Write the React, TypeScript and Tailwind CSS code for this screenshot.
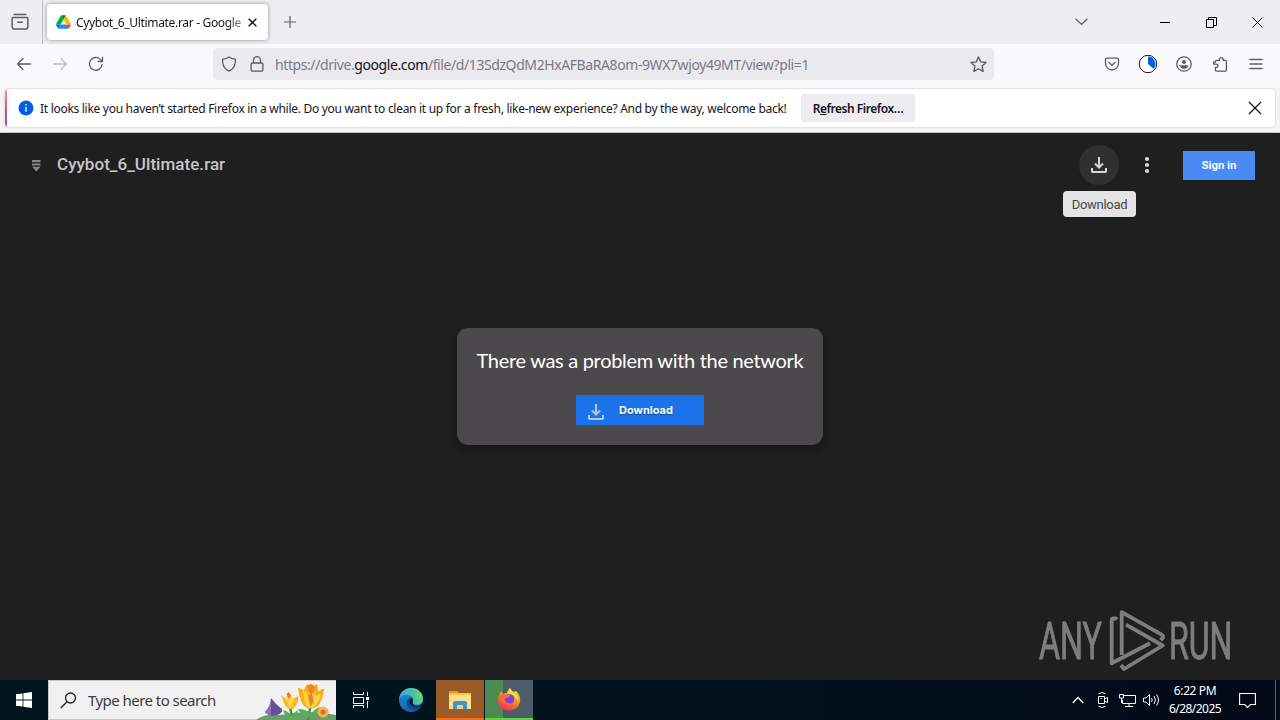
import type { ReactNode } from "react";

const stroke = { fill: "none", strokeLinecap: "round", strokeLinejoin: "round" } as const;

function ToolIcon({ children, size = 16, width = 1.3, className = "" }: { children: ReactNode; size?: number; width?: number; className?: string }) {
  return (
    <svg width={size} height={size} viewBox="0 0 16 16" stroke="currentColor" strokeWidth={width} {...stroke} className={`block shrink-0 ${className}`}>
      {children}
    </svg>
  );
}

function DriveLogo() {
  return (
    <svg width="15" height="14" viewBox="0 0 87.3 78" className="block shrink-0">
      <path fill="#0066da" d="m6.6 66.85 3.85 6.65c.8 1.4 1.95 2.5 3.3 3.3l13.75-23.8h-27.5c0 1.55.4 3.1 1.2 4.5z" />
      <path fill="#00ac47" d="m43.65 25-13.75-23.8c-1.35.8-2.5 1.9-3.3 3.3l-25.4 44a9.06 9.06 0 0 0 -1.2 4.5h27.5z" />
      <path fill="#ea4335" d="m73.55 76.8c1.35-.8 2.5-1.9 3.3-3.3l1.6-2.75 7.65-13.25c.8-1.4 1.2-2.95 1.2-4.5h-27.5l5.85 11.5z" />
      <path fill="#00832d" d="m43.65 25 13.75-23.8c-1.35-.8-2.9-1.2-4.5-1.2h-18.5c-1.6 0-3.15.45-4.5 1.2z" />
      <path fill="#2684fc" d="m59.8 53h-32.3l-13.75 23.8c1.35.8 2.9 1.2 4.5 1.2h50.8c1.6 0 3.15-.45 4.5-1.2z" />
      <path fill="#ffba00" d="m73.4 26.5-12.7-22c-.8-1.4-1.95-2.5-3.3-3.3l-13.75 23.8 16.15 28h27.45c0-1.55-.4-3.1-1.2-4.5z" />
    </svg>
  );
}

function DownloadIcon({ className = "" }: { className?: string }) {
  return (
    <svg width="18" height="18" viewBox="0 0 18 18" fill="none" stroke="currentColor" strokeWidth="2" className={`block shrink-0 ${className}`}>
      <path d="M9 1v10M5 7.5l4 4 4-4M2 12v3.6c0 .3.2.4.4.4h13.2c.3 0 .4-.1.4-.4V12" />
    </svg>
  );
}

function TabStrip() {
  return (
    <div className="flex h-11 items-center bg-[#eeedf2] text-[#5b5b66]">
      <div className="flex h-11 w-[43px] items-center justify-center border-r border-[#bdbcc4] pr-[2px]">
        <ToolIcon size={18}>
          <path d="M2.7 1.4h10.6M2 4h12a1 1 0 0 1 1 1v7.3a2 2 0 0 1-2 2H3a2 2 0 0 1-2-2V5a1 1 0 0 1 1-1ZM6 8.2h4" />
        </ToolIcon>
      </div>
      <div className="ml-[4px] flex h-9 w-[221px] items-center rounded bg-white pl-[9px] text-[#15141a] shadow-[0_0_4px_rgba(0,0,0,0.4)]">
        <DriveLogo />
        <div className="ml-[5px] mt-[2px] w-[168px] whitespace-nowrap bg-gradient-to-r from-[#15141a] from-90% to-[#15141a66] bg-clip-text text-[12px] leading-4 tracking-[-0.33px] text-transparent">
          Cyybot_6_Ultimate.rar - Google
        </div>
        <svg width="9" height="9" viewBox="0 0 9 9" stroke="#15141a" strokeWidth="1.5" className="ml-[4px]">
          <path d="M.7.7l7.6 7.6M8.3.7L.7 8.3" />
        </svg>
      </div>
      <svg width="12" height="12" viewBox="0 0 12 12" stroke="#5b5b66" strokeWidth="1.2" className="ml-[16px]">
        <path d="M6 0v12M0 6h12" />
      </svg>
      <div className="ml-auto flex items-center">
        <svg width="13" height="8" viewBox="0 0 13 8" stroke="#5b5b66" strokeWidth="1.3" {...stroke} className="mr-[72px]">
          <path d="M1 1.2l5.5 5.2L12 1.2" />
        </svg>
        <div className="mr-[36px] h-px w-[10px] bg-black" />
        <svg width="11" height="11" viewBox="0 0 11 11" fill="none" stroke="#000" className="mr-[35px]">
          <path d="M.5 2.5h7v8h-7zM2.5 2.5v-2h8v8h-3" />
        </svg>
        <svg width="11" height="11" viewBox="0 0 11 11" stroke="#000" strokeWidth="1" className="mr-[17px]">
          <path d="M.5.5l10 10M10.5.5l-10 10" />
        </svg>
      </div>
    </div>
  );
}

function NavBar() {
  return (
    <div className="flex h-11 items-start bg-[#f9f9fb] pt-1 text-[#5b5b66]">
      <div className="flex h-8 w-[213px] items-center gap-5 pl-4">
        <ToolIcon><path d="M1.5 8h13M7 2.5L1.5 8 7 13.5" /></ToolIcon>
        <ToolIcon className="text-[#c0c0c6]"><path d="M1.5 8h13M9 2.5L14.5 8 9 13.5" /></ToolIcon>
        <ToolIcon><path d="M14.2 8.3A6.4 6.4 0 1 1 12.4 3.4L14.3 5.2M14.5 1.2v4.3h-4.3" /></ToolIcon>
      </div>
      <div className="flex h-8 w-[781px] items-center rounded bg-[#eae9ee] pl-2">
        <ToolIcon><path d="M8 .9c1.7 1.3 4 2 6.4 2.2.4 5-1.3 9.7-6.4 12C2.9 12.8 1.2 8.1 1.6 3.1 4 2.9 6.3 2.2 8 .9Z" /></ToolIcon>
        <ToolIcon className="ml-3"><path d="M4.5 7V4.2a3.5 3.5 0 0 1 7 0V7M3.300 7h9.4c.7 0 1.2.5 1.2 1.2v5.6c0 .8-.5 1.3-1.2 1.3H3.3c-.7 0-1.2-.5-1.2-1.3V8.2C2.1 7.5 2.6 7 3.3 7Z" /></ToolIcon>
        <div className="ml-[10px] mt-[2px] whitespace-nowrap text-[14px] leading-5 tracking-[-0.41px] text-[#7b7a82]">
          https://drive.<span className="text-[#15141a]">google.com</span>/file/d/13SdzQdM2HxAFBaRA8om-9WX7wjoy49MT/view?pli=1
        </div>
        <ToolIcon size={17} className="ml-auto mr-[7px]"><path d="M8 1l2.1 4.5 4.9.6-3.6 3.4.9 4.9L8 12l-4.3 2.4.9-4.9L1 6.1l4.9-.6z" /></ToolIcon>
      </div>
      <div className="ml-auto flex h-8 items-center gap-5 pr-4">
        <ToolIcon><path d="M2.5 2.2h11a1 1 0 0 1 1 1V7.500a6.5 6.5 0 0 1-13 0V3.2a1 1 0 0 1 1-1ZM4.8 6.2L8 9.2l3.2-3" /></ToolIcon>
        <svg width="20" height="20" viewBox="0 0 20 20" className="-mx-[2px] block">
          <circle cx="10" cy="10" r="8.7" fill="#fff" stroke="#15141a" />
          <path d="M10 10V2.6a7.4 7.4 0 0 1 5.6 12.2z" fill="#0061e0" />
        </svg>
        <ToolIcon>
          <circle cx="8" cy="8" r="7.2" />
          <circle cx="8" cy="6" r="2.1" fill="currentColor" stroke="none" />
          <path d="M3.9 9.6h8.2c-.4 2-2.1 3.2-4.1 3.2s-3.7-1.2-4.1-3.2Z" fill="currentColor" strokeWidth=".5" />
        </ToolIcon>
        <ToolIcon><path d="M3.400 6.200V5.500c0-.8.4-1.200 1.200-1.200H7.500V3a1.900 1.900 0 0 1 3.700 0v1.300h2c.8 0 1.2.4 1.2 1.2v8.4c0 .8-.4 1.2-1.2 1.2H4.6c-.8 0-1.2-.4-1.2-1.2v-2.500h1a1.600 1.600 0 0 0 0-3.200H1.600V6.200z" /></ToolIcon>
        <ToolIcon><path d="M2 3.500h12M2 8h12M2 12.500h12" /></ToolIcon>
      </div>
    </div>
  );
}

function Notification() {
  return (
    <div className="h-[45px] border-b border-[#c4c4c8] bg-[#f4f4f6] px-[5px] pt-px">
      <div className="flex h-[38px] items-center overflow-hidden rounded bg-white text-[#15141a] shadow-[0_0_2px_rgba(0,0,0,0.25)]">
        <div className="h-full w-[2px] bg-gradient-to-b from-[#f5a068] via-[#d3508f] to-[#8d55c0]" />
        <svg width="16" height="16" viewBox="0 0 16 16" className="ml-[11px]">
          <circle cx="8" cy="8" r="7.5" fill="#0061e0" />
          <path d="M8 7v4.8M8 4v1.4" stroke="#fff" strokeWidth="1.3" />
        </svg>
        <div className="ml-[6px] mt-[2px] w-[761px] whitespace-nowrap text-[12px] leading-4 tracking-[-0.29px]">
          It looks like you haven’t started Firefox in a while. Do you want to clean it up for a fresh, like-new experience? And by the way, welcome back!
        </div>
        <button className="h-7 w-[114px] whitespace-nowrap rounded-[3px] bg-[#ededf0] pt-[2px] text-[12px] font-semibold tracking-[-0.47px]">
          R<span className="underline">e</span>fresh Firefox…
        </button>
        <svg width="14" height="14" viewBox="0 0 14 14" stroke="#15141a" strokeWidth="1.3" className="ml-auto mr-[13px]">
          <path d="M1 1l12 12M13 1L1 13" />
        </svg>
      </div>
    </div>
  );
}

function Watermark() {
  return (
    <svg width="204" height="64" viewBox="0 0 204 64" className="absolute bottom-[7px] right-[40px] block opacity-90">
      <g fill="#89898a" stroke="#89898a" strokeWidth=".9" fontFamily="Roboto" fontSize="51" fontWeight="400">
        <text x="3" y="50" textLength="63" lengthAdjust="spacingAndGlyphs">ANY</text>
        <text x="133" y="50" textLength="63.5" lengthAdjust="spacingAndGlyphs">RUN</text>
      </g>
      <g fill="none" stroke="#89898a" strokeWidth="3.8" strokeLinejoin="round">
        <path d="M81 10.500l-1-1h-2.300q-2 0-2 2V54.300L114 34.300" />
        <path d="M85.700 46V3.200l40 22.500q2.500 2 .5 4l-1.500 1.500" />
        <path d="M90 15.700l36.700 20.800L88 60l-3-4" />
      </g>
    </svg>
  );
}

function DriveViewer() {
  return (
    <div className="relative flex h-[547px] flex-col bg-[#1f1f1f]">
      <div className="flex h-16 items-center">
        <svg width="10" height="12" viewBox="0 0 10 12" className="ml-[31px] mt-px block" fill="#85878a">
          <path d="M1 0h8.500v2.200H1zM1 3.400h8.500v2.200H1zM1 6.800h8.500L5.300 11.500z" />
        </svg>
        <div className="ml-4 mt-[-2px] whitespace-nowrap font-['Roboto'] text-[17px] font-medium leading-6 tracking-[0.04px] text-[#c4c7c5]">Cyybot_6_Ultimate.rar</div>
        <div className="relative ml-auto flex size-10 items-center justify-center rounded-full bg-[#303030] text-[#d6d6d6]">
          <DownloadIcon />
          <div className="absolute left-[-16px] top-[46px] h-[26px] w-[73px] rounded bg-[#e3e3e3] text-center font-['Roboto'] text-[13px] leading-[28px] tracking-[-0.3px] text-[#444746]">Download</div>
        </div>
        <svg width="6" height="18" viewBox="0 0 6 18" fill="#d6d6d6" className="ml-[25px] block">
          <circle cx="3" cy="3" r="2.1" />
          <circle cx="3" cy="9" r="2.1" />
          <circle cx="3" cy="15" r="2.1" />
        </svg>
        <button className="ml-[33px] mr-[25px] h-[29px] w-[72px] bg-[#4a8af4] pt-px font-['Roboto'] text-[11.5px] font-bold tracking-[-0.1px] text-[#f3f7fe]">Sign in</button>
      </div>
      <div className="mx-auto mt-[131px] flex h-[117px] w-[366px] flex-col items-center rounded-[11px] bg-[#4b494b] pt-[18px] shadow-[0_5px_14px_rgba(0,0,0,0.3)]">
        <div className="whitespace-nowrap font-['Lato'] text-[20px] leading-7 tracking-[-0.31px] text-white">There was a problem with the network</div>
        <button className="mt-[21px] flex h-[30px] w-[128px] items-center bg-[#1a73e8] font-['Inter'] text-[11px] font-bold text-white">
          <DownloadIcon className="ml-[11px] mt-[3px] text-[#a9caf7]" />
          <span className="ml-[14px] [text-shadow:0_1px_1px_rgba(0,0,0,0.4)]">Download</span>
        </button>
      </div>
      <Watermark />
    </div>
  );
}

function Flowers() {
  return (
    <svg width="82" height="40" viewBox="0 0 82 40" className="block">
      <path d="M2 40q10-7 25-5 30-6 55 0v5z" fill="#6a9f68" />
      <path d="M36 28q2 5 1 12M57 24q-2 9-3 16" stroke="#459344" strokeWidth="2.500" fill="none" />
      <path d="M44 29q3 6 9 9l5-2q8-3 8-9-6 2-9 7-5-5-13-5ZM29 30q2 6 6 10h5q3-5 4-10-4 2-6 6-4-5-9-6z" fill="#5bae58" />
      <g transform="translate(3 -2)">
        <path d="M14 20q5 7 11 11 1 4-5 6-8 2-12-3 6-6 6-14z" fill="#66509c" />
        <path d="M14 20q0 8 0 17-5-1-6-3 6-6 6-14z" fill="#8874b8" />
      </g>
      <g transform="matrix(.8 0 0 1 12.500 -2)">
        <path d="M18 17q4 2 6 4l3-6 5 6 8-3q0 10-8 13-8 0-10-6z" fill="#fbb81e" />
        <path d="M24 22l4-6 6 6-4 8z" fill="#ffd54b" />
        <path d="M25 16l3-2 3 4-3 3z" fill="#f07a21" />
      </g>
      <g transform="matrix(.82 0 0 .95 14.500 1)">
        <path d="M36 7q5 1 7 3l4-7 5 5 7-5 2 8q4-3 7-3-1 10-7 18-10 6-18 0-6-8-7-19z" fill="#faaf19" />
        <path d="M42 10l6 4 4-9 6 11 6-3q-2 10-8 14-6 3-10-1-4-8-4-16z" fill="#ffd245" />
        <path d="M47 5l5-2 5 3-2 7h-5zM48 15l5-3 2 10-4 5z" fill="#f28222" />
      </g>
      <circle cx="69" cy="32" r="5.500" fill="#f6b252" />
      <circle cx="69" cy="32" r="2.500" fill="#e06b25" />
    </svg>
  );
}

function EdgeLogo() {
  return (
    <svg width="26" height="26" viewBox="0 0 26 26" className="block">
      <defs>
        <linearGradient id="edgeTop" x1="0" x2="1" y1=".4" y2=".2"><stop stopColor="#2f9fe5" /><stop offset="1" stopColor="#66dc6b" /></linearGradient>
        <linearGradient id="edgeLow" x1="0" x2="0" y1="0" y2="1"><stop stopColor="#2290d9" /><stop offset="1" stopColor="#1263af" /></linearGradient>
      </defs>
      <circle cx="13" cy="13" r="12" fill="url(#edgeLow)" />
      <path d="M1 12C2 5 7 1 13 1c7 0 12 5 12 10.500 0 4-3 6-6 6-3 0-5-1-4-3 1.500-3-1-6.500-6-6.500-4 0-7 2-8 4z" fill="url(#edgeTop)" />
      <path d="M12 11c-5 2-5 9 2 12 4 1 7 0 9-3-6 2-10-1-9-5l-1-3z" fill="#124a86" />
      <path d="M13 11c2 1 2.500 3 1.700 4.500-.5 1.700 1.500 3.500 4.300 3.500 2.500 0 4-1 6-3l-2 4c-6 1-11-1-11.500-5-.2-2 .5-3 1.500-4z" fill="#05232f" />
    </svg>
  );
}

function FirefoxLogo() {
  return (
    <svg width="24" height="24" viewBox="0 0 24 24" className="block">
      <defs>
        <linearGradient id="foxFire" x1=".8" x2=".2" y1="0" y2="1"><stop stopColor="#ffe43e" /><stop offset=".45" stopColor="#ff8b22" /><stop offset="1" stopColor="#f0245e" /></linearGradient>
      </defs>
      <path d="M3 6l1-2 2 3q2-1 4-1 1-3 3-5 1 3 4 4l2-1q5 5 4 11-2 8-11 8.500Q1 23 1 13q0-4 2-7z" fill="url(#foxFire)" />
      <path d="M10 6q1-3 3-5 1 3 5 5 4 4 3 9-3-8-11-9z" fill="#ffdc3b" />
      <circle cx="12.500" cy="12" r="4.800" fill="#7545df" />
      <path d="M4 8q5-2 9 0 0 2-3 3-3 0-2 3 2 3 6 2-3 4-7 1-4-4-3-9z" fill="#ff6a30" />
    </svg>
  );
}

function Taskbar() {
  return (
    <div className="flex h-10 bg-gradient-to-r from-[#01161e] via-[#02131f] to-[#020919] text-white">
      <div className="flex w-12 items-center justify-center">
        <svg width="16" height="16" viewBox="0 0 16 16" fill="#fff">
          <path d="M0 2.300l6.600-.9v6.200H0zM7.400 1.300L16 0v7.600H7.400zM0 8.400h6.600v6.200L0 13.700zM7.400 8.400H16V16l-8.600-1.300z" />
        </svg>
      </div>
      <div className="flex w-[288px] items-center border border-r-0 border-[#c9c9c9] bg-[#f1f1f1] text-[#3b3b3b]">
        <svg width="17" height="17" viewBox="0 0 17 17" fill="none" stroke="#222" strokeWidth="1.3" className="ml-[11px]">
          <circle cx="10.500" cy="6" r="5" /><path d="M7 9.700L.8 16" />
        </svg>
        <span className="ml-[11px] whitespace-nowrap text-[15px] tracking-[-0.55px]">Type here to search</span>
        <div className="ml-auto"><Flowers /></div>
      </div>
      <div className="flex w-12 items-center justify-center">
        <svg width="17" height="16" viewBox="0 0 17 16" fill="none" stroke="#fff">
          <path d="M1.500 0v2.500h10V0M1.500 5.500h10v6h-10zM1.500 16v-2.500h10V16M15.500 0v4M15.500 9v7" />
          <path d="M14 5h3v3h-3z" fill="#fff" stroke="none" />
        </svg>
      </div>
      <div className="flex w-[52px] items-center pl-[14px]"><EdgeLogo /></div>
      <div className="flex w-12 items-center justify-center border-b-2 border-[#f86a16] bg-[#9b5b28]">
        <svg width="22" height="20" viewBox="0 0 22 20" className="mt-px block">
          <path d="M0 1h8l2 2h12v16H0z" fill="#f6c34c" />
          <path d="M0 5h22v14H0z" fill="#ffe08a" />
          <path d="M0 1h8l1.500 2H0z" fill="#dc9f2b" />
          <path d="M4 19v-6q0-2 2-2h10q2 0 2 2v6h-4v-4H8v4z" fill="#3e95d6" />
          <path d="M8 15h6v4H8z" fill="#f2cf72" />
        </svg>
      </div>
      <div className="ml-px flex w-12 items-center justify-center border-b-2 border-[#5ed33e] bg-gradient-to-r from-[#4b8b52] from-[18px] to-[#4d5c68] to-[18px]"><FirefoxLogo /></div>
      <div className="ml-auto flex items-center">
        <svg width="12" height="8" viewBox="0 0 12 8" fill="none" stroke="#fff" strokeWidth="1.3"><path d="M.8 7L6 1.500 11.200 7" /></svg>
        <svg width="13" height="18" viewBox="0 0 13 18" fill="none" stroke="#fff" className="ml-3">
          <path d="M2.500 5.500h6v7h-6zM8.500 8l3-1.500v5l-3-1.500M2.500 3q3.500-3 7 0M2.500 15q3.500 3 7 0" /><path d="M4.500 7.500H6" />
        </svg>
        <svg width="17" height="16" viewBox="0 0 17 16" fill="none" stroke="#fff" className="ml-[10px]">
          <path d="M5 3.500h11.500v8H3.500V8M10 11.500v3M6 14.500h8M.5 2.500h4V6h-4zM2.500 6v5" />
        </svg>
        <svg width="17" height="14" viewBox="0 0 17 14" fill="none" stroke="#fff" className="ml-[7px]">
          <path d="M.5 5v4H3l3.500 3.500v-11L3 5zM8.500 5q1.500 2 0 4M11 3q3 4 0 8M13.500 1.500q4 5.500 0 11" />
        </svg>
        <div className="ml-[4px] flex w-[62px] flex-col items-center text-[12px] leading-[18px] tracking-[-0.4px]">
          <span>6:22 PM</span>
          <span className="tracking-[-0.55px]">6/28/2025</span>
        </div>
        <svg width="17" height="17" viewBox="0 0 17 17" fill="none" stroke="#fff" strokeWidth="1.1" className="ml-[13px] mt-px">
          <path d="M.6 1.500h15.800v11h-5L8.500 15.500l-2.900-3h-5z" />
        </svg>
        <div className="ml-[19px] mr-1 h-10 w-px bg-[#5c626d]" />
      </div>
    </div>
  );
}

export default function App() {
  return (
    <div className="h-[720px] w-[1280px] overflow-hidden font-['Noto_Sans',sans-serif]">
      <TabStrip />
      <NavBar />
      <Notification />
      <DriveViewer />
      <Taskbar />
    </div>
  );
}
